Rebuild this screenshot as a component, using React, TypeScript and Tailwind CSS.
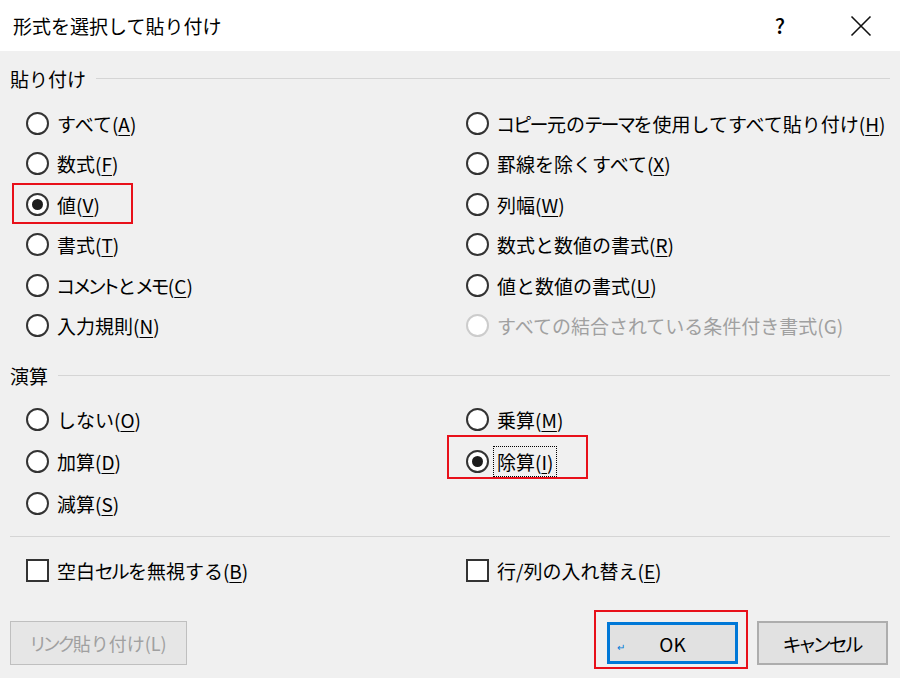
import type { ReactNode } from 'react';
import clsx from 'clsx';

type Option = {
  label: string;
  key?: string;
  checked?: boolean;
  disabled?: boolean;
  mark?: 'value' | 'divide';
  focus?: boolean;
};

const pasteLeft: Option[] = [
  { label: 'すべて', key: 'A' },
  { label: '数式', key: 'F' },
  { label: '値', key: 'V', checked: true, mark: 'value' },
  { label: '書式', key: 'T' },
  { label: 'コメントとメモ', key: 'C' },
  { label: '入力規則', key: 'N' },
];

const pasteRight: Option[] = [
  { label: 'コピー元のテーマを使用してすべて貼り付け', key: 'H' },
  { label: '罫線を除くすべて', key: 'X' },
  { label: '列幅', key: 'W' },
  { label: '数式と数値の書式', key: 'R' },
  { label: '値と数値の書式', key: 'U' },
  { label: 'すべての結合されている条件付き書式(G)', disabled: true },
];

const opLeft: Option[] = [
  { label: 'しない', key: 'O' },
  { label: '加算', key: 'D' },
  { label: '減算', key: 'S' },
];

const opRight: Option[] = [
  { label: '乗算', key: 'M' },
  { label: '除算', key: 'I', checked: true, mark: 'divide', focus: true },
];

// the dialog font sets katakana narrower than kanji and hiragana
function Kana({ text }: { text: string }) {
  const parts = text.split(/([ァ-ヶー]+)/);
  return (
    <>
      {parts.map((p, i) =>
        /^[ァ-ヶー]+$/.test(p) ? (
          <span key={i} className="tracking-[-1.5px] [font-feature-settings:'palt']">
            {p}
          </span>
        ) : (
          p
        )
      )}
    </>
  );
}

function Radio({ checked, disabled }: { checked?: boolean; disabled?: boolean }) {
  return (
    <span
      className={clsx(
        'flex h-[23px] w-[23px] shrink-0 items-center justify-center rounded-full border-2 bg-white',
        disabled ? 'border-[#cccccc]' : 'border-[#333333]'
      )}
    >
      {checked && <span className="h-[11px] w-[11px] rounded-full bg-[#1c1c1c]" />}
    </span>
  );
}

function Label({ text, hotkey }: { text: string; hotkey?: string }) {
  if (!hotkey) return <Kana text={text} />;
  return (
    <>
      <Kana text={text} />(<span className="underline decoration-1 underline-offset-[3px]">{hotkey}</span>)
    </>
  );
}

function RadioRow({ opt, tall }: { opt: Option; tall?: boolean }) {
  return (
    <div className={clsx('flex items-center', tall ? 'h-[42px]' : 'h-[40.5px]')}>
      <div className="relative flex items-center gap-[8px]">
        {opt.mark === 'value' && (
          <span className="pointer-events-none absolute -left-[14px] -top-[10px] h-[41px] w-[121px] border-2 border-[#e8101a]" />
        )}
        {opt.mark === 'divide' && (
          <span className="pointer-events-none absolute -left-[19px] -top-[11px] h-[44px] w-[141px] border-2 border-[#e8101a]" />
        )}
        <Radio checked={opt.checked} disabled={opt.disabled} />
        <span
          className={clsx(
            'leading-none whitespace-nowrap',
            opt.disabled ? 'text-[#a0a0a0]' : 'text-black',
            opt.focus && '-ml-[4px] border border-dotted border-black px-[3px] py-[5px]'
          )}
        >
          <Label text={opt.label} hotkey={opt.key} />
        </span>
      </div>
    </div>
  );
}

function GroupHeader({ title }: { title: string }) {
  return (
    <div className="flex h-[26px] items-center gap-[10px]">
      <span className="leading-none text-black">{title}</span>
      <span className="h-px flex-1 bg-[#d5d5d5]" />
    </div>
  );
}

function Checkbox({ children }: { children: ReactNode }) {
  return (
    <div className="flex items-center gap-[8px]">
      <span className="h-[23px] w-[23px] shrink-0 border-2 border-[#333333] bg-white" />
      <span className="leading-none whitespace-nowrap">{children}</span>
    </div>
  );
}

export default function App() {
  return (
    <div
      className="flex h-[678px] w-[900px] flex-col bg-[#f0f0f0] text-[19px] text-black"
      style={{ fontFamily: '"Noto Sans CJK JP", "Noto Sans", sans-serif' }}
    >
      {/* title bar */}
      <div className="flex h-[51px] shrink-0 items-center bg-white pl-[13px] pr-[18px]">
        <span className="flex-1 leading-none">形式を選択して貼り付け</span>
        <span className="mr-[40px] w-[40px] text-center text-[21px] font-medium leading-none">?</span>
        <svg width="42" height="30" viewBox="0 0 42 30" className="shrink-0">
          <path d="M11.5 5.5 L30.5 24.5 M30.5 5.5 L11.5 24.5" stroke="#111" strokeWidth="1.6" fill="none" />
        </svg>
      </div>

      <div className="flex flex-1 flex-col px-[10px] pt-[14px]">
        <GroupHeader title="貼り付け" />
        <div className="mt-[12px] grid grid-cols-[440px_1fr] pl-[16px]">
          <div>
            {pasteLeft.map((o) => (
              <RadioRow key={o.label} opt={o} />
            ))}
          </div>
          <div>
            {pasteRight.map((o) => (
              <RadioRow key={o.label} opt={o} />
            ))}
          </div>
        </div>

        <div className="mt-[16px]">
          <GroupHeader title="演算" />
        </div>
        <div className="mt-[10px] grid grid-cols-[440px_1fr] pl-[16px]">
          <div>
            {opLeft.map((o) => (
              <RadioRow key={o.label} opt={o} tall />
            ))}
          </div>
          <div>
            {opRight.map((o) => (
              <RadioRow key={o.label} opt={o} tall />
            ))}
          </div>
        </div>

        <div className="mt-[12px] h-px bg-[#d5d5d5]" />

        <div className="grid h-[66px] grid-cols-[440px_1fr] items-center pl-[16px]">
          <Checkbox>
            <Label text="空白セルを無視する" hotkey="B" />
          </Checkbox>
          <Checkbox>
            <Label text="行/列の入れ替え" hotkey="E" />
          </Checkbox>
        </div>

        <div className="mt-[18px] flex items-center justify-between">
          <button className="flex h-[44px] w-[177px] items-center justify-center border border-[#bfbfbf] bg-[#e6e6e6] text-[18px] leading-none text-[#a0a0a0]">
            <Kana text="リンク貼り付け(L)" />
          </button>
          <div className="mr-[2px] flex items-center gap-[19px]">
            <div className="relative">
              <span className="pointer-events-none absolute -left-[13px] -top-[12px] h-[59px] w-[154px] border-2 border-[#e8101a]" />
              <button className="relative flex h-[42px] w-[131px] items-center justify-center border-[3px] border-[#0078d7] bg-[#e1e1e1] text-[19px] leading-none">
                <span className="absolute bottom-[9px] left-[7px] text-[10px] leading-none text-[#0078d7]">↵</span>
                OK
              </button>
            </div>
            <button className="flex h-[44px] w-[131px] items-center justify-center border-2 border-[#adadad] bg-[#e1e1e1] text-[19px] leading-none">
              <Kana text="キャンセル" />
            </button>
          </div>
        </div>
      </div>
    </div>
  );
}
